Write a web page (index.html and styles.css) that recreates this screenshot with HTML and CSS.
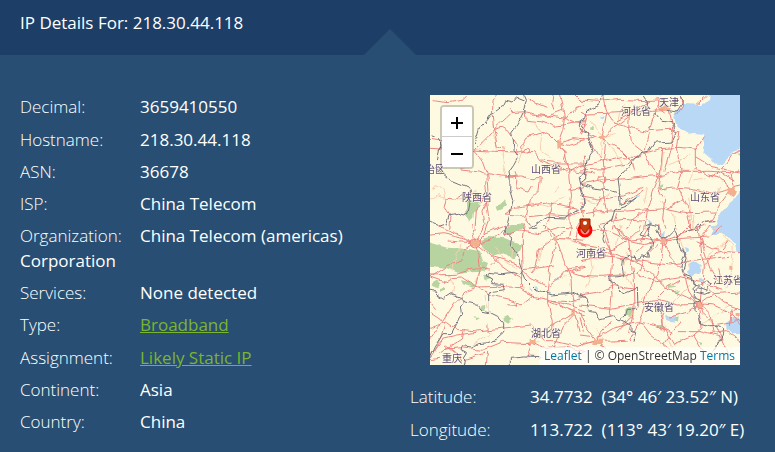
FILE: index.html
```html
<!DOCTYPE html>
<html lang="en">
  <head>
    <meta charset="utf-8">
    <title>IP Details</title>
    <link rel="stylesheet" href="styles.css">
  </head>
  <body>
    <h1 class="ip-header">IP Details For: 218.30.44.118</h1>
    <div class="ip-details">
      <ul class="info-list">
        <li><span class="label">Decimal:</span><span class="value">3659410550</span></li>
        <li><span class="label">Hostname:</span><span class="value">218.30.44.118</span></li>
        <li><span class="label">ASN:</span><span class="value">36678</span></li>
        <li><span class="label">ISP:</span><span class="value">China Telecom</span></li>
        <li><span class="label">Organization:</span><span class="value">China Telecom (americas) Corporation</span></li>
        <li><span class="label">Services:</span><span class="value">None detected</span></li>
        <li><span class="label">Type:</span><a href="#broadband">Broadband</a></li>
        <li><span class="label">Assignment:</span><a href="#static-ip">Likely Static IP</a></li>
        <li><span class="label">Continent:</span><span class="value">Asia</span></li>
        <li><span class="label">Country:</span><span class="value">China</span></li>
      </ul>
      <div class="location">
        <div class="map">
          <svg class="map-tiles" viewBox="0 0 310 270" preserveAspectRatio="xMidYMid slice">
            <!-- makes roads and borders wind a little -->
            <filter id="winding" x="-5%" y="-5%" width="110%" height="110%">
              <feTurbulence type="fractalNoise" baseFrequency="0.09" numOctaves="2" seed="4"/>
              <feDisplacementMap in="SourceGraphic" scale="6" xChannelSelector="R" yChannelSelector="G"/>
            </filter>
            <g filter="url(#winding)">
            <!-- north west -->
            <g transform="translate(-5 -5) scale(.3333)">
              <path class="forest" d="M126 340l14-10 24 6-4 18-12 12-4 22-12 8-12-28 6-8zM212 350l18-8 10-14 6 16-14 14-16 4zM250 414l30-10 22-2-10 18h-42zM152 316h16v6h-14z"/>
              <path class="minor" d="M240 172l-8 32 6 30 6 26M152 300l-34 24-18 4M20 300l16-12 18 14 6 20M204 130l12 34 0 20M330 100l20 30-4 50 30 20M404 290l-18 14M300 160l-20 60M15 330l24-16 22 8M330 340l40 10 50-30M440 340l-16 50"/>
              <path class="road" d="M26 32l40 6 50-8 12-12M214 15l-10 20-2 40 4 44-22 26-36 34 24 28 16 44 4 50-10 40 8 50-14 40M206 118l38-34 16-16 40-3 40 9 78 10 34 14 30 6M206 118l26-6 20 12 24 40-4 30M206 118l6 22 4 28 22 10M146 180l60 4 72 2 22-4M260 68l-2-14M300 65l4 26 44 4 40 14 66-10 26-4M404 15l8 34 6 38-4 30-14 38 4 14 20 20-6 20 12 18 2 40 8 50-6 50 2 44-6 36M400 160l44-14 36 4M400 160l30 6 50-14M400 160l-22-22-24-14-52 18-14 30 14 14 24 2 20 26 56 22 108 16M384 222l96 0M450 15l20 20 10-4M418 90l30-36 30-10M300 186l-18 6M106 240l60 6 18 8-2 30 6 40-14 40 6 40M182 250l50 8 36 4M66 324l24 4 24-14 32-2 14 16 26-6M66 324l-6 28 18 26-4 40M180 320l-26 40-4 60M240 262l50-4 26 8 30 0-4 36-28 28-10 50 10 22M270 246l6 20-4 30 40 10 10-18M316 346l54-8 66 12 44 10M316 346l-46 6-30 20 50 4 30 30M346 210l44 4 36 36 54-30M312 380l60-6 60 4 48-20M430 300l50-10M415 60l-50 20-50-6M310 24l20 14 34 14M384 15l-4 26 8 20M15 175l34 2M15 148l34 6M380 338l-8 50-12 32M404 170l14 10 12 50"/>
              <path class="town" d="M394 150h12v20h-12z"/>
              <circle class="road" cx="307" cy="182" r="7"/>
              <path class="border" d="M296 15l6 14-8 24 6 10-10 20-14 24-16 22 6 26-2 26 14 20-12 22-14 20 4 28-2 26 10 34-8 36-8 30-10 40M296 30l-20-8-12 14-24-6-10 20-30 22-14 20-20 22-6 22-12 26M15 135l22 10 8 24-8 40M30 232l44 36 34 14 28 14 0 40-8 42-30-8-26 4-6 24-24 8-30-14M480 86l-14 6 0 30 14 6M480 248l-18 12 6 26 8 24 0 36-32 20-22 18-54-2-26 14-24 16"/>
            </g>
            <!-- north east -->
            <g transform="translate(150 -5) scale(.3333)">
              <path class="sea" d="M500 0H388L384 34 354 44 312 42 292 58 280 80 284 100 312 122 334 134 366 138 374 158 370 190 384 202 398 220 424 222 452 198 462 182 500 170zM500 290l-34 26-10 20-30 26-18 30-14 40h106z"/>
              <path class="forest" d="M238 288l12-6-4 22-10-4zM252 298l12-4-2 12zM470 190l10-4v10zM28 112h10v8h-10z"/>
              <path class="sea" d="M170 314h10l-2 8h-8zM56 84l20-8-10 12zM204 390l16 14-12 2zM450 300h12v6h-12z"/>
              <path class="minor" d="M250 186l-6 60-14 14M326 190l-20 20-40 14M326 320l8 60 2 40M70 140l40-10M346 230l-20 50M0 330l50 10 40-30M240 330l40 40 10 50M90 166l40 60M30 90l40 50-10 60M200 290l-10 50M380 260l-40 10M420 290l-20 40M130 40l-20 60M322 376l24 4M324 390l20 6M330 370l-4 50M342 374l-4 40"/>
              <path class="road" d="M0 30l60 4 60-6 80 4 54-4M70 15l10 50 20 30 60-30 50-32M20 72l60-2 74-4 64-2 50-4M0 64l22 10-10 40-12 20M80 70l-14 70 10 26-6 50 4 50-4 50 10 50M70 142l30-30 56-42 12-26M148 66l-2 50 10 44 34 26M100 95l60 20 46 10M0 148l40-10 30 4M0 120l26 10 44 16M70 150l60 34 20 20 10 40M206 122l64-4 30 8M206 120l20-50 10-40M194 190l14-60M194 190l-30 12-40-2-60 14-64 14M194 190l46-14 60-4 48 6 22-38M194 190l22 40 24 28M0 240l70-4 70-14 40-24M0 282l60-12 80-4 96-10M236 258l60-14 94 0 60 4 30-8M300 124l-8 50 14 70-14 50 18 34M346 175v60l40 20 30 10 36 30M346 200l50 30 84 16M240 258l-6 40 20 28-6 60 10 30M236 258l-20 50-14 50-8 62M240 256l8-80M272 95l8 30-6 40-22 80M242 300l40-6 50 4 60 14 60-14M0 320l50 10 80-12 60-26M0 370l60-8 60 2 70-4 70-4 60 12 90-2M130 340l60-40M40 380l20-60M10 200l6 60M400 260l40-40 20-30 20-10M390 258l30-10 40 22M452 300l-30 40-30 50-24 10M320 372l10 48M260 356l50-30 20 40M200 360l-50 40-10 20M60 400l70-12 62 6M300 15l8 30-20 30M240 15l-6 40 20 14M268 60l12 60-6 10M380 18l-30 26M448 298l32-10M10 400l-10-60M110 370l-14 50M450 250l10 40M30 150l30 60"/>
              <path class="town" d="M234 60l30 4 10-8-20-10zM446 294l16 0 6 12-12 14-10-8zM60 136h14v14h-14z"/>
              <circle class="road" cx="67" cy="268" r="11"/>
              <circle class="road" cx="236" cy="256" r="8"/>
              <path class="border" d="M68 15l-8 30-40 18-8 28-12 10M0 100l26 40 14 36-16 20-10 50 0 24-14 10M190 15l12 18 0 20M300 15l8 20-20 30-24-4M226 70l20 24 30 4 14 30-14 28-54 4-16 24-24 4-26 30-26 30-16 16 4 32 2 50 34-14 18-12-34 28-34 12-8 30-20 16-10 40 6 14M0 280l40 14 50 6 30 10 6 20M0 290l14 56-14 10M198 410l14-6 24 6v10M370 400l10-6 20-2"/>
            </g>
            <!-- south west -->
            <g transform="translate(-5 130) scale(.3333)">
              <path class="forest" d="M0 48l69 20 60 4 36 6 10 30 14 6-10 26-46 2-24 4-40-16-69-10zM162 46l28-10 50 4 20 8 34 8-8 20-20 26-6 0-16-14-40 6-30-24zM108 166l24 4 22 10-10 8-30-10zM166 242l14-2 2 18-14 0zM236 276l12-6 16 12-14 14-14-8zM244 12l10-12h46l-16 14-26 14-10-4zM178 154l16-8 8 12-20 8zM22 180l16-10 8 4-12 16zM40 192l14-4v10l-10 4zM146 274l12 2-6 8z"/>
              <path class="sea" d="M328 178l10 10-6 6zM396 158l8 8-10 4zM444 220l12 6-10 4zM310 180l10 20-8-4zM372 200l10 10h-8z"/>
              <path class="minor" d="M108 60l-20 40-4 40M210 60l30 50 40 20M260 40l-2 60M70 150l16 30-4 30M170 120l-20 60M350 70l-8 40M180 210l10 40M390 36l60 14M200 320l-60 40M470 120l-60 40M340 350l-60 8"/>
              <path class="road" d="M0 32l55-6 50 12 44 16M40 0l20 14 50 20 40 20M68 48l84 6 44-8 34-24 20-22M150 54l-10-54M150 54l28-54M150 54l30-30 60-24M150 54l-30 20-10 34-40 14-55 36M150 54l12 34 4 42-12 56-30 14-34 32-40 62-45 60M150 54l50 40 80 24 14 16 70-8 26-6M234 30l50-12 60 8 60-20 40 4M15 150l80-2 56-20 44 4M15 158l40 14 24-14 30-2 44 30 70-2 60 4 40 26 50 10 70 20 40 14M154 186l50 26 60 14 30 14 32-26M200 94l30 30 28 20 30 16 6 30M294 134l-2 40-8 14M298 0l-6 40 2 90M298 140l20 20 50 26 40-30 10-22 60-10M368 20l26 30-10 40-10 40-6 56 0 46 14 60-4 40M394 40l20 60 24 60 2 40 8 60 14 60M394 30l-30-20-10-10M394 40l86 6M418 20l-24 14-50 40-10 50-16 20M418 134l62 20M368 226l80 34 32 10M448 268l-30 30-30 70M460 0l-10 50 30 14M378 226l50 4 52-16M15 310l50-20 30 24 20 0 40 4 74-8 90-10 30 30 6 20 40 0 60 14 55-16M15 390l40-50 40-10 60-8M15 260l30 20 14 18-12 40-20 40M60 372l50-4 60 8 60-24 90 4M320 350l-14 50M320 350l30-30 34-20 60-32M320 350l40 20 60-4 60 14M190 320l-2-26M118 312l-6 30-70 46M188 380l-4 40M15 230l20 24M244 236l50 4M274 226v20M30 380l-15 20M60 360l40 30 10 30M440 140l40-14M15 404l30-4M200 120l20-20M120 404l60-20"/>
              <path class="town" d="M140 46h22v16h-22zM388 32h12v12h-12zM314 342h18v12h-18zM442 262h10v10h-10z"/>
              <circle class="road" cx="150" cy="54" r="12"/>
              <path class="border" d="M240 0l6 26 14 12-4 22 20 30 10 20 10 30-10 10-24-8-30 4-40-4-6 10 20 10-6 14 34 2 4 16-44 6 0 30 0 36-20-4-20-24-36-8-14-14-26-10-22 14-20-12-10-14-26-4-22-10M292 140l10 24 30 30 50 16 60-6 22 10 16-6M120 226l-14 20 4 20-20 34-12 26-24 0-26 40-18 40M198 264l20 10 18 20 0 30-20 18-30 12-28 2-20 10-26-4-4 12 16 8-10 16 10 6-4 26M256 430v-30l40-4 46 2-6 8M310 10l30-4"/>
            </g>
            <!-- south east -->
            <g transform="translate(150 130) scale(.3333)">
              <path class="sea" d="M384 0l30 18 30 16 24 26 6 24 26 20V0zM438 290l20-12 42 6v46l-42 0-18-16zM340 108l22 16-2 18-28 10-10-14 10-8-6-14zM258 270l26 4 12 10-14 6-20-4zM246 30l12-14-4 26zM314 66l12 4-6 10zM386 94l8 10-10-4zM356 160h10v10h-8z"/>
              <path class="forest" d="M136 252l20-6 6 16-10 14-16-4zM268 180l22 8-20 4zM232 300h20l-8 16zM282 284l14-8-2 14zM276 200l24-6-6 10zM360 350l10 4-4 8z"/>
              <path class="minor" d="M30 70l10 60-20 60M450 46l-50 30-30 60M400 0l60 60-4 60M120 0l-10 60M140 80l-10 50 30 60M300 40l30 90M50 310l20 40M460 130l-20 60M206 230l40 40M260 340l20 40M200 210l-60 80M370 290l80-50M330 180l-60 60"/>
              <path class="road" d="M36 16l40 0 70 30 50-6 50 10 60-10 80-4 40-34M146 44l6 60 8 60 2 90-16 70M146 44l-30-20-10-24M146 44l30-30 6-14M146 44l-50 30-96-14M250 46l-60 10-44-10M250 48l-6 40-10 60-30 50-18 70-18 40-20 40M250 48l20 50 40 40 16 60 24 36M250 48l-14-48M250 48l66-26 64-22M60 0l16 44 20 40-4 60 4 70-6 60M0 110l80-14 90 10 100 14 70-14 110-12M0 150l60 4 100-6 70 22 70-12 60 14 70 24M40 90l50-6 70 22M76 20l20 70M150 100l60 40 50 50 60 26 40 22M0 210l50-8 50-20 60 10M0 240l94 10 50-10 90-14 60 14 66-2M234 230l10 40 8 40 30 50M230 220l30-30 40-24M94 286l-34 40-10 24 90-4M48 350l30 20M50 340l50-30 70-20 60 12 50 24M50 350l-30-40-20-50M50 350l-50 6M360 236l6-60 4-50-10-80-10-46M360 236l40-30 100-6M360 236l40 4 44 20 56 60M360 236l30 30 10 60M360 236l-40 26-50 14M360 236l10 30 40 40 40 90M330 216l30 40 6 50-34 30-50 20M382 190l50 44 68 26M390 0l-30 40 30 90 20 34M400 300l100-18M390 326l50-6 60 46M350 50l40 20 50 10 60 4M370 120l50-40 24-30M248 360l30-40 26-30M180 290l30 40 60 46M300 320l60 0 60 16M340 330l30 50M250 320l-2-60M200 90l30-30M190 60l-30 30M110 320l50-50M0 330l30 4M448 300l8-50M450 262l20-14M416 130l10 40M170 150l30-60M10 320l-10-40M100 0l46 40M210 0l-30 50M330 0l-40 40"/>
              <path class="town" d="M243 42h14v14h-14zM350 228h20v18h-20zM42 344h24v16h-26zM448 122h12v12h-12zM464 264h12v12h-12z"/>
              <circle class="road" cx="250" cy="50" r="11"/>
              <circle class="road" cx="360" cy="238" r="10"/>
              <path class="border" d="M180 30l10-16M180 30l14 4 14-4 10 20-4 20-10 10 4 20-20-8-6 10-14 0-6-10-20-4-12 14-2 20 6 30-26 4-20 0 4 16 20 10 20 24 20-8 20-12 2 64M0 210l18 10 10 40 20 2 10 20 40-10 22 16 16-12 6-20 26 0M126 288l30 14 0 14 14 4-8 30M210 30l-8-20 10-10M230 14l10 24 20 0 20-20 12 20 10 36 16 10-10 20-6 24 6 24 26 8 14 22-10 10 12 10 24 6 14-6M308 70l10 30-12 44 30 10 8 26 14 4 20-20 16 10-14 24-26-10-10 10-2 20 20 8-20 10 0 20 20 20 4 20 20 6 30 0 16 10-6 20-12 20-4 20-10 10M280 20l10-20M320 20l40-20M345 20l14-4 6-16"/>
            </g>
            </g>
            <g class="places">
              <text x="191" y="20">河北省</text>
              <text x="229" y="11">天津</text>
              <text x="101" y="78">山西省</text>
              <text x="-15" y="78">自治区</text>
              <text x="32" y="106">陕西省</text>
              <text x="260" y="106">山东省</text>
              <text x="146" y="162">河南省</text>
              <text x="283" y="189">江苏省</text>
              <text x="214" y="216">安徽省</text>
              <text x="101" y="242">湖北省</text>
              <text x="12" y="267">重庆</text>
            </g>
            <circle class="spot" cx="155" cy="135" r="6"/>
            <path class="pin" d="M150 124h10v8l-5 6-5-6z"/>
            <circle class="pin-hole" cx="155" cy="128" r="2"/>
          </svg>
          <div class="zoom-control">
            <button type="button" aria-label="Zoom in"><svg viewBox="0 0 12 12"><path d="M6 0v12M0 6h12"/></svg></button>
            <button type="button" aria-label="Zoom out"><svg viewBox="0 0 12 12"><path d="M0 6h12"/></svg></button>
          </div>
          <div class="attribution"><a href="#leaflet">Leaflet</a> | © OpenStreetMap <a href="#terms">Terms</a></div>
        </div>
        <ul class="info-list">
          <li><span class="label">Latitude:</span><span class="value">34.7732&nbsp; (34° 46′ 23.52″ N)</span></li>
          <li><span class="label">Longitude:</span><span class="value">113.722&nbsp; (113° 43′ 19.20″ E)</span></li>
        </ul>
      </div>
    </div>
  </body>
</html>
```

FILE: styles.css
```css
* {
  box-sizing: border-box;
}
body {
  margin: 0;
  background-color: #284f73;
  color: #fff;
  font-family: "Open Sans", sans-serif;
  font-size: 17px;
  line-height: 1.43;
}
.ip-header {
  position: relative;
  margin: 0;
  padding: 11px 20px 20px;
  background-color: #1d3e66;
  font-size: 17px;
  font-weight: 400;
}
/* arrow pointing up into the header */
.ip-header::after {
  content: "";
  position: absolute;
  left: 50%;
  bottom: 0;
  margin-left: -24px;
  border: 26px solid transparent;
  border-top: 0;
  border-bottom-color: #284f73;
}
.ip-details {
  display: grid;
  grid-template-columns: 1fr 1fr;
  column-gap: 25px;
  padding: 40px 0 0 20px;
}
.info-list {
  margin: 0;
  padding: 0;
  list-style: none;
}
.info-list li {
  margin-bottom: 8px;
}
.label {
  display: inline-block;
  width: 120px;
  font-weight: 300;
}
.value {
  font-weight: 500;
}
.info-list a {
  color: #7bb52e;
}

.map {
  position: relative;
  height: 270px;
  margin: 0 35px 20px 20px;
  overflow: hidden;
  background-color: #fefae2;
}
.map-tiles {
  display: block;
  width: 100%;
  height: 100%;
  fill: none;
}
.road {
  stroke: #ec8582;
  stroke-width: 3;
}
.minor {
  stroke: #f8cfb0;
  stroke-width: 3;
}
.border {
  stroke: #77717f;
  stroke-width: 3;
}
.forest {
  fill: #b7d3a0;
}
.sea {
  fill: #b9d8f5;
}
.town {
  fill: #f3b08e;
}
.places {
  fill: #5c4a75;
  stroke: #fefae2;
  stroke-width: 1px;
  paint-order: stroke;
  font-family: "Noto Sans CJK SC", sans-serif;
  font-size: 10px;
}
.spot {
  fill: #f08a7c;
  stroke: #f00;
  stroke-width: 3px;
}
.pin {
  fill: #c93a0c;
  stroke: #8e2508;
}
.pin-hole {
  fill: #fff;
}
.zoom-control {
  position: absolute;
  top: 10px;
  left: 10px;
  width: 34px;
  border: 2px solid rgba(0, 0, 0, 0.2);
  border-radius: 4px;
}
.zoom-control button {
  display: flex;
  align-items: center;
  justify-content: center;
  width: 30px;
  height: 30px;
  padding: 3px 0 0;
  border: 0;
  border-radius: 0 0 2px 2px;
  background-color: #fff;
}
.zoom-control button:first-child {
  border-bottom: 1px solid #ccc;
  border-radius: 2px 2px 0 0;
}
.zoom-control svg {
  width: 12px;
  height: 12px;
  stroke: #000;
  stroke-width: 2;
}
.attribution {
  position: absolute;
  right: 0;
  bottom: 0;
  padding: 0 5px;
  background-color: rgba(255, 255, 255, 0.7);
  color: #333;
  font-size: 12px;
  line-height: 18px;
}
.attribution a {
  color: #0078a8;
  text-decoration: none;
}
```
